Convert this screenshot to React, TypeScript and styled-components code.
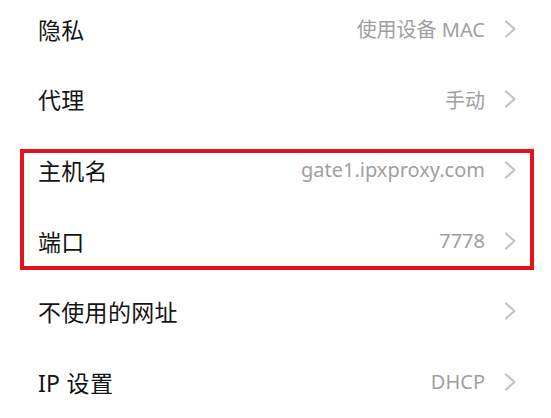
import React from "react";
import styled, { createGlobalStyle } from "styled-components";

const GlobalStyle = createGlobalStyle`
  html, body {
    margin: 0;
    padding: 0;
    background: #ffffff;
  }
  body {
    font-family: "Noto Sans", "Noto Sans CJK SC", sans-serif;
    overflow: hidden;
  }
`;

const Page = styled.div`
  width: 551px;
  height: 418px;
  overflow: hidden;
  background: #ffffff;
`;

const List = styled.div`
  display: flex;
  flex-direction: column;
  margin-top: -6.5px;
`;

const Highlight = styled.div`
  position: relative;
  display: flex;
  flex-direction: column;

  &::after {
    content: "";
    position: absolute;
    top: 14px;
    bottom: 6px;
    left: 20px;
    right: 17px;
    border: 4px solid #e3121c;
    pointer-events: none;
  }
`;

const Row = styled.div`
  display: flex;
  align-items: center;
  height: 70.6px;
  padding: 0 35px 0 38px;
`;

const Label = styled.span`
  flex: 1;
  font-family: "Noto Sans", "Noto Sans CJK SC", sans-serif;
  font-size: 23px;
  color: #141414;
  letter-spacing: 0.3px;
`;

const Value = styled.span`
  font-family: "Noto Sans", "Noto Sans CJK SC", sans-serif;
  font-size: 20px;
  color: #a0a0a0;
  margin-right: 19px;
`;

const Chevron = styled.svg`
  width: 12px;
  height: 18px;
  flex-shrink: 0;
`;

interface ItemProps {
  label: string;
  value?: string;
}

const Item: React.FC<ItemProps> = ({ label, value }) => (
  <Row>
    <Label>{label}</Label>
    {value && <Value>{value}</Value>}
    <Chevron viewBox="0 0 12 18">
      <polyline
        points="2,1.5 10.5,9 2,16.5"
        fill="none"
        stroke="#c4c4c4"
        strokeWidth="2.2"
        strokeLinecap="round"
        strokeLinejoin="round"
      />
    </Chevron>
  </Row>
);

const App: React.FC = () => {
  return (
    <Page>
      <GlobalStyle />
      <List>
        <Item label="隐私" value="使用设备 MAC" />
        <Item label="代理" value="手动" />
        <Highlight>
          <Item label="主机名" value="gate1.ipxproxy.com" />
          <Item label="端口" value="7778" />
        </Highlight>
        <Item label="不使用的网址" />
        <Item label="IP 设置" value="DHCP" />
      </List>
    </Page>
  );
};

export default App;
